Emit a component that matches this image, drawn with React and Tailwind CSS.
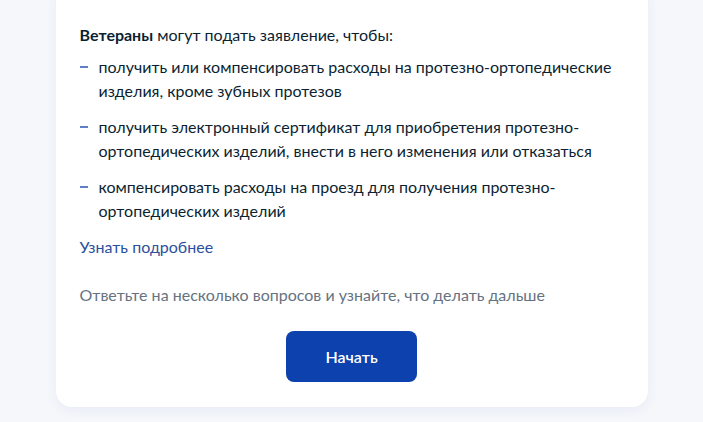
import React from "react";

const ITEMS = [
  "получить или компенсировать расходы на протезно-ортопедические изделия, кроме зубных протезов",
  "получить электронный сертификат для приобретения протезно-ортопедических изделий, внести в него изменения или отказаться",
  "компенсировать расходы на проезд для получения протезно-ортопедических изделий",
];

export default function App() {
  return (
    <div
      className="min-h-screen bg-[#f5f7fb] overflow-hidden pb-[15px]"
      style={{ fontFamily: "Lato, 'Noto Sans', sans-serif" }}
    >
      <div className="mx-auto -mt-[20px] w-[592px] rounded-2xl bg-white px-6 pt-[43px] pb-[25px] shadow-[0_4px_12px_rgba(28,68,140,0.06)]">
        <p className="text-base leading-6 text-[#0b1f33]">
          <span className="font-bold">Ветераны</span> могут подать заявление, чтобы:
        </p>

        {/* список оснований */}
        <ul className="mt-2 flex flex-col gap-3">
          {ITEMS.map((text) => (
            <li key={text} className="flex text-base leading-6 text-[#0b1f33]">
              <span className="flex h-6 w-[19px] shrink-0 items-center">
                <span className="block h-[2px] w-2 bg-[#5f80c6]" />
              </span>
              <span>{text}</span>
            </li>
          ))}
        </ul>

        <a href="#" className="mt-3 block text-base leading-6 text-[#2c4f9e]">
          Узнать подробнее
        </a>

        <p className="mt-6 text-base leading-6 text-[#66727f]">
          Ответьте на несколько вопросов и узнайте, что делать дальше
        </p>

        <div className="mt-6 flex justify-center">
          <button className="h-[51px] w-[131px] rounded-lg bg-[#0c41ae] text-base font-semibold text-white">
            Начать
          </button>
        </div>
      </div>
    </div>
  );
}
